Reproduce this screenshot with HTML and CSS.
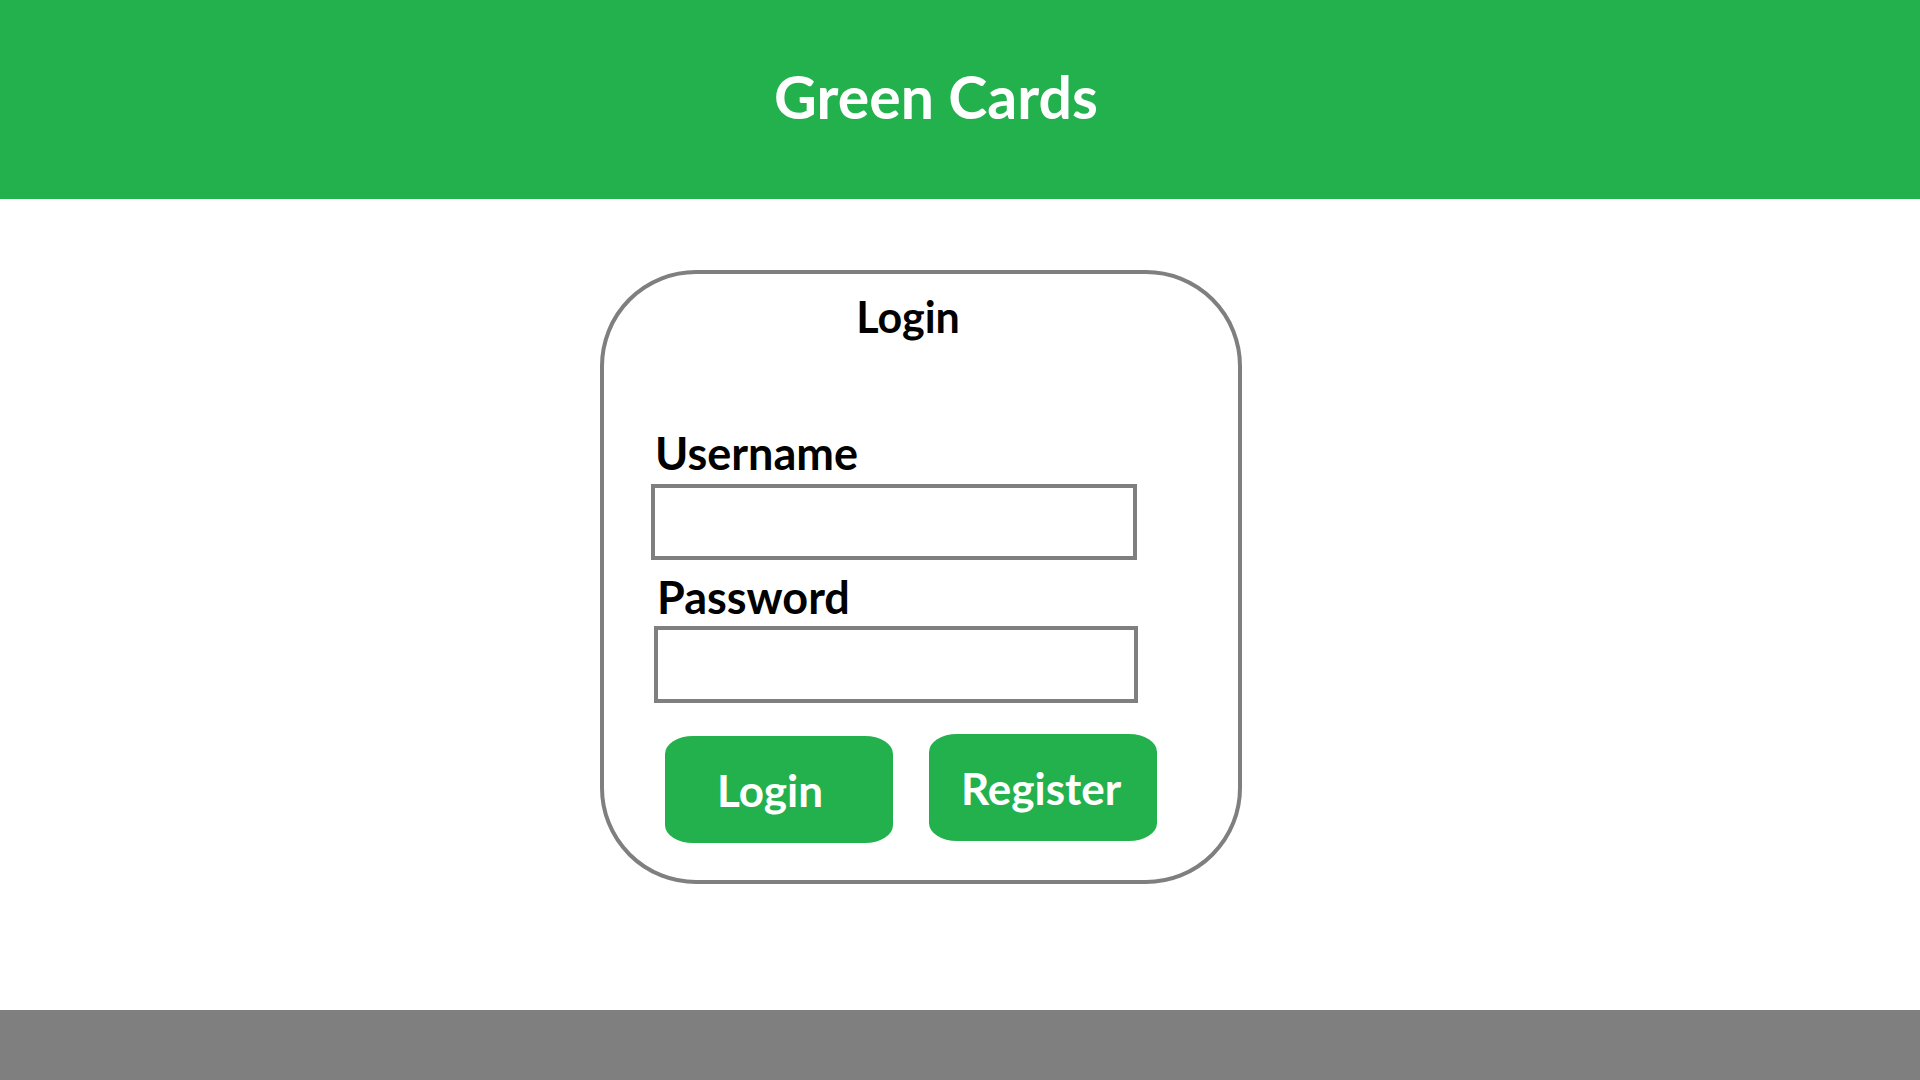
FILE: index.html
```html
<!DOCTYPE html>
<html lang="en">
<head>
<meta charset="utf-8">
<title>Green Cards</title>
<link rel="stylesheet" href="styles.css">
</head>
<body>
<div class="page">
  <header class="topbar">
    <h1 class="brand">Green Cards</h1>
  </header>
  <main class="content">
    <form class="card">
      <h2 class="card-title">Login</h2>
      <label class="field-label label-user" for="username">Username</label>
      <input class="field-input input-user" id="username" type="text">
      <label class="field-label label-pass" for="password">Password</label>
      <input class="field-input input-pass" id="password" type="password">
      <div class="actions">
        <button class="btn btn-login" type="button">Login</button>
        <button class="btn btn-register" type="button">Register</button>
      </div>
    </form>
  </main>
  <footer class="bottombar"></footer>
</div>
</body>
</html>
```

FILE: styles.css
```css
* { box-sizing: border-box; }

html, body {
  margin: 0;
  padding: 0;
  background: #ffffff;
}

body {
  font-family: "Lato", "Open Sans", "Liberation Sans", sans-serif;
  font-weight: 700;
  color: #000000;
}

.page {
  width: 1920px;
  height: 1080px;
  display: flex;
  flex-direction: column;
  overflow: hidden;
}

.topbar {
  height: 199px;
  flex: 0 0 199px;
  background: #22b14c;
  display: flex;
  align-items: center;
  justify-content: center;
  padding-right: 48px;
  padding-bottom: 5px;
}

.brand {
  margin: 0;
  font-size: 59px;
  line-height: 1.2;
  font-weight: 700;
  color: #ffffff;
}

.content {
  flex: 1 1 auto;
  padding-top: 71px;
  padding-left: 600px;
}

.card {
  width: 642px;
  height: 614px;
  border: 4px solid #7f7f7f;
  border-radius: 96px;
  padding-top: 17px;
  display: flex;
  flex-direction: column;
  align-items: flex-start;
}

.card-title {
  align-self: stretch;
  margin: 0;
  padding-right: 26px;
  text-align: center;
  font-size: 43px;
  line-height: 1.2;
  font-weight: 700;
}

.field-label {
  display: block;
  font-size: 45px;
  line-height: 1.2;
  font-weight: 700;
}

.label-user {
  margin: 83px 0 0 51px;
}

.label-pass {
  margin: 10px 0 0 53px;
}

.field-input {
  display: block;
  height: 76px;
  border: 4px solid #7f7f7f;
  border-radius: 0;
  background: #ffffff;
  padding: 0 10px;
  font: inherit;
  outline: none;
}

.input-user {
  width: 486px;
  margin: 4px 0 0 47px;
}

.input-pass {
  width: 484px;
  height: 77px;
  margin: 2px 0 0 50px;
}

.actions {
  display: flex;
  align-items: flex-start;
  gap: 36px;
  margin: 31px 0 0 61px;
}

.btn {
  width: 228px;
  height: 107px;
  border: none;
  border-radius: 28px / 18px;
  background: #22b14c;
  color: #ffffff;
  font-family: inherit;
  font-size: 44px;
  line-height: 1.2;
  font-weight: 700;
  display: flex;
  align-items: center;
  justify-content: center;
  padding: 2px 0 0 0;
  cursor: pointer;
}

.btn-login {
  margin-top: 2px;
  padding-right: 18px;
}

.btn-register {
  margin-top: 0;
  padding-right: 4px;
}

.bottombar {
  height: 70px;
  flex: 0 0 70px;
  background: #7f7f7f;
}
```
